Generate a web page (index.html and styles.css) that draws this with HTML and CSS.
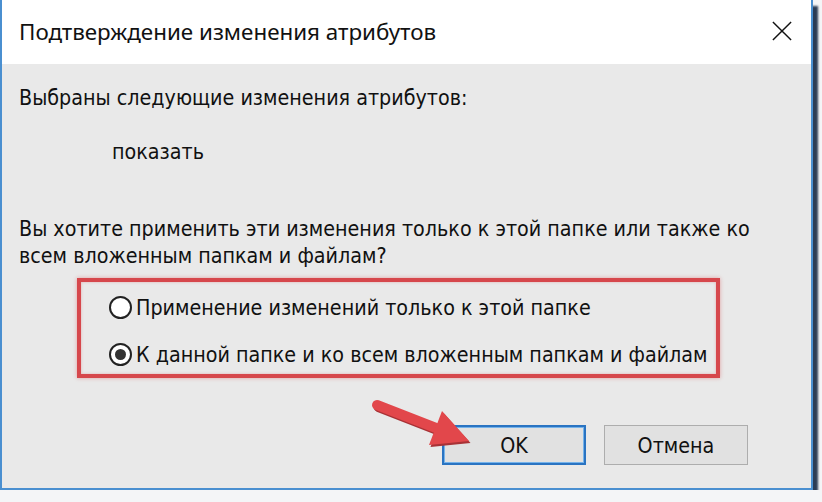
FILE: index.html
```html
<!DOCTYPE html>
<html lang="ru">
<head>
    <meta charset="UTF-8">
    <title>Подтверждение изменения атрибутов</title>
    <link rel="stylesheet" href="styles.css">
</head>
<body>
<div class="window">
    <div class="titlebar">
        <span class="title">Подтверждение изменения атрибутов</span>
        <svg class="close" width="22" height="22" viewBox="0 0 22 22">
            <path d="M1 1 L21 21 M21 1 L1 21" stroke="#111" stroke-width="1.6" fill="none"/>
        </svg>
    </div>

    <div class="content">
        <p class="lead">Выбраны следующие изменения атрибутов:</p>
        <p class="change">показать</p>
        <p class="question">Вы хотите применить эти изменения только к этой папке или также ко<br>всем вложенным папкам и файлам?</p>

        <div class="choices">
            <label class="choice"><span class="radio"></span>Применение изменений только к этой папке</label>
            <label class="choice"><span class="radio checked"></span>К данной папке и ко всем вложенным папкам и файлам</label>
        </div>

        <div class="buttons">
            <button class="btn btn-default">OK</button>
            <button class="btn">Отмена</button>
        </div>
    </div>

    <!-- red pointer drawn over the dialog -->
    <svg class="arrow" width="115" height="60" viewBox="365 395 115 60">
        <g fill="#a83236" transform="translate(1.5 2)">
            <path d="M377 405 L436 428" stroke="#a83236" stroke-width="10" stroke-linecap="round"/>
            <polygon points="442,411 469,441 429,445"/>
        </g>
        <g fill="#e2474b">
            <path d="M377 405 L436 428" stroke="#e2474b" stroke-width="10" stroke-linecap="round"/>
            <polygon points="442,411 469,441 429,445"/>
        </g>
    </svg>
</div>
</body>
</html>
```

FILE: styles.css
```css
*{
    box-sizing: border-box;
}
body{
    margin: 0;
    background-color: #f4f5f7;
}

.window{
    position: relative;
    width: 813px;
    height: 490px;
    background-color: #e9e9e9;
    border: 2px solid #4a8fd0;
    border-top: none;
    box-shadow: 5px 6px 2px #2b3c55;
}

.titlebar{
    display: flex;
    align-items: center;
    justify-content: space-between;
    height: 64px;
    padding: 0 19px 0 17px;
    background-color: #fff;
}
.title{
    font-family: 'Noto Sans', 'Open Sans', sans-serif;
    font-size: 22.4px;
    color: #111;
    margin-bottom: 2px;
}
.close{
    width: 20px;
    height: 20px;
    margin-bottom: 2px;
}

.content{
    padding-left: 17px;
    font-family: 'DejaVu Sans', Verdana, sans-serif;
    font-stretch: condensed;
    font-size: 21.3px;
    line-height: 27px;
    color: #111;
}
.content p{
    margin: 0;
    white-space: nowrap;
}
.lead{
    padding-top: 20px;
}
.change{
    margin-top: 27px !important;
    padding-left: 93px;
}
.question{
    margin-top: 50px !important;
}

.choices{
    display: flex;
    flex-direction: column;
    gap: 20px;
    width: 643px;
    margin: 9px 0 0 58px;
    padding: 12px 0 6px 28px;
    border: 4px solid #d6474c;
    box-shadow: 0 0 4px rgba(214, 71, 76, .45), inset 0 0 3px rgba(214, 71, 76, .35);
}
.choice{
    display: flex;
    align-items: center;
    gap: 4px;
    white-space: nowrap;
}
.radio{
    display: inline-flex;
    align-items: center;
    justify-content: center;
    width: 23px;
    height: 23px;
    border: 2px solid #222;
    border-radius: 50%;
    background-color: #fff;
}
.radio.checked::after{
    content: '';
    width: 11px;
    height: 11px;
    border-radius: 50%;
    background-color: #333;
}

.buttons{
    display: flex;
    justify-content: flex-end;
    gap: 18px;
    margin-top: 47px;
    padding-right: 63px;
}
.btn{
    width: 144px;
    height: 40px;
    font-family: 'DejaVu Sans', Verdana, sans-serif;
    font-stretch: condensed;
    font-size: 21.3px;
    color: #111;
    background-color: #e1e1e1;
    border: 1px solid #adadad;
}
.btn-default{
    border: 2px solid #2a74c2;
    box-shadow: inset 0 0 0 1px #76b3ea;
}

.arrow{
    position: absolute;
    left: 363px;
    top: 395px;
}
```
